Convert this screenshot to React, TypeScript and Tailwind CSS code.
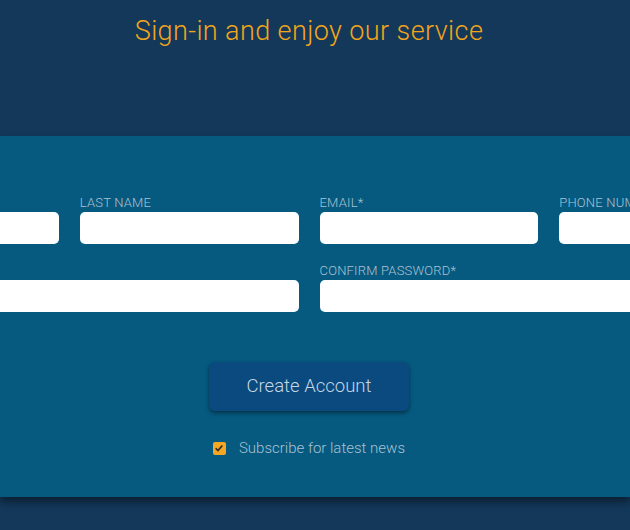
import { useState } from "react";

const font = { fontFamily: "Roboto, 'Liberation Sans', sans-serif" };

function Field(props: { label: string; span?: boolean; type?: string }) {
  return (
    <div className={props.span ? "col-span-2 flex flex-col" : "flex flex-col"}>
      <label className="text-[13px] leading-4 mb-[1px] uppercase text-[#a9c1d3] font-light tracking-[0.2px]">
        {props.label}
      </label>
      <input type={props.type ?? "text"} className="h-[32px] w-full rounded-[5px] bg-white px-2 text-sm text-gray-800 outline-none" />
    </div>
  );
}

export default function App() {
  const [subscribe, setSubscribe] = useState(true);

  return (
    <div className="min-h-[530px] w-[630px] bg-[#13385a] overflow-hidden" style={font}>
      <div className="h-[136px] w-[618px] pt-[15px] flex justify-center">
        <h1 className="text-[27px] leading-8 font-light text-[#f2a51b] tracking-[0.4px]">Sign-in and enjoy our service</h1>
      </div>

      <section className="bg-[#065a7f] h-[361px] pt-[59px] shadow-[0_5px_8px_rgba(0,0,0,0.45)] relative">
        <div className="w-[618px] flex justify-center">
          <div className="w-[938px] shrink-0 grid grid-cols-4 gap-x-[21px] gap-y-[19px]">
            <Field label="First name*" />
            <Field label="Last name" />
            <Field label="Email*" type="email" />
            <Field label="Phone number" />
            <Field label="Password*" span type="password" />
            <Field label="Confirm password*" span type="password" />
          </div>
        </div>

        <div className="w-[618px] flex flex-col items-center">
          <button className="mt-[50px] h-[49px] w-[200px] rounded-[6px] bg-[#0a4a7e] text-[18.5px] font-light text-[#c7d6e3] shadow-[0_2px_4px_rgba(0,0,0,0.45)]">
            Create Account
          </button>
          <label className="mt-[26px] flex items-center gap-[13px] text-[15px] font-light text-[#a8c0d2] cursor-pointer">
            <span
              onClick={() => setSubscribe(!subscribe)}
              className="h-[13px] w-[13px] rounded-[2px] bg-[#f5a623] flex items-center justify-center"
            >
              {subscribe && (
                <svg viewBox="0 0 12 12" className="h-[10px] w-[10px]">
                  <path d="M2 6.3 L4.8 9 L10 3" fill="none" stroke="#2b2b2b" strokeWidth="2" />
                </svg>
              )}
            </span>
            Subscribe for latest news
          </label>
        </div>
      </section>
    </div>
  );
}
